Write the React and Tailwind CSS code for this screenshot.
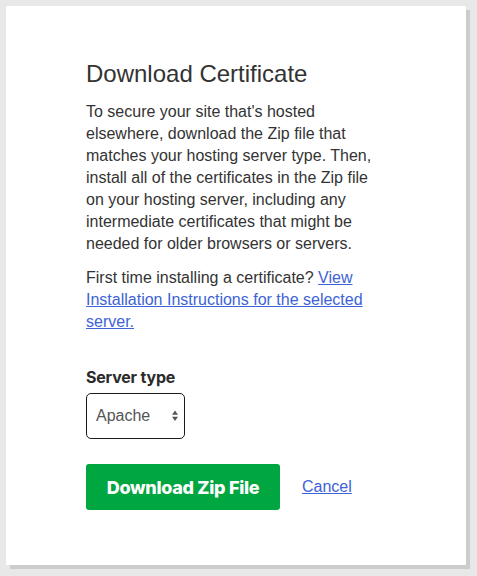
import React from 'react';

const SelectArrows = () => (
  <svg className="pointer-events-none absolute right-[7px] top-1/2 -translate-y-1/2" width="6" height="11" viewBox="0 0 6 11">
    <path d="M3 0 L6 4.2 L0 4.2 Z" fill="#555555" />
    <path d="M0 6.3 L6 6.3 L3 10.5 Z" fill="#555555" />
  </svg>
);

const App = () => {
  return (
    <div className="min-h-[576px] w-[477px] bg-[#e8e8e8] pt-[6px] pl-[6px]">
      <div className="w-[460px] h-[559px] bg-white shadow-[4px_4px_0_#cccccc] pl-[80px] pt-[53px] font-['Liberation_Sans',Arial,sans-serif] text-[#333333]">
        <div className="w-[300px]">
          <h2 className="text-[24px] leading-[30px] font-normal">Download Certificate</h2>
          <p className="mt-3 text-[16px] leading-[22px]">
            To secure your site that's hosted elsewhere, download the Zip file that matches your hosting server type. Then, install all of the certificates in the Zip file on your hosting server, including any intermediate certificates that might be needed for older browsers or servers.
          </p>
          <p className="mt-3 text-[16px] leading-[22px]">
            First time installing a certificate?{' '}
            <a href="#" className="text-[#3d63d6] underline">
              View Installation Instructions for the selected server.
            </a>
          </p>

          <label className="block mt-[33px] text-[16px] leading-[22px] font-bold font-['Inter',sans-serif] text-[#2b2b2b] tracking-[-0.2px]">
            Server type
          </label>
          <div className="relative mt-[5px] w-[99px]">
            <select className="appearance-none w-[99px] h-[46px] border border-[#1a1a1a] rounded-[5px] bg-white pl-[9px] text-[16px] text-[#555555] font-['Liberation_Sans',Arial,sans-serif] outline-none">
              <option>Apache</option>
            </select>
            <SelectArrows />
          </div>

          <div className="flex items-center mt-[25px]">
            <button className="w-[194px] h-[46px] rounded-[3px] bg-[#00a63f] text-white text-[18px] font-extrabold font-['Inter',sans-serif] tracking-[-0.3px]">
              Download Zip File
            </button>
            <a href="#" className="ml-[22px] text-[16px] leading-[22px] text-[#3d63d6] underline">
              Cancel
            </a>
          </div>
        </div>
      </div>
    </div>
  );
};

export default App;
